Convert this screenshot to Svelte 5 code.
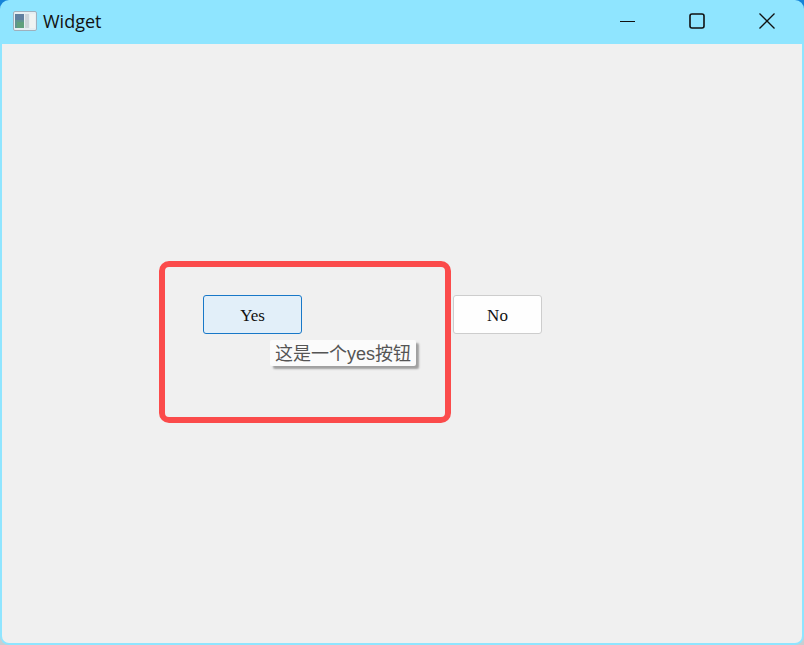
<script>
    const yesTip = "这是一个yes按钮";
</script>

<div class="corner-bg">
    <div class="window">
        <header class="titlebar">
            <div class="title">
                <svg class="app-icon" width="24" height="20" viewBox="0 0 24 20" aria-hidden="true">
                    <rect x="0.5" y="0.5" width="23" height="19" rx="1.5" fill="#e6eef2" stroke="#9fb0bd" />
                    <rect x="2" y="3" width="9" height="14" fill="#5f9490" />
                    <rect x="2" y="3" width="9" height="6" fill="#5f7f9f" />
                    <rect x="4" y="11" width="7" height="6" fill="#5fa07c" />
                    <rect x="12" y="3" width="4" height="14" fill="#cdd5da" />
                    <rect x="17" y="3" width="5" height="14" fill="#f0f3f2" />
                </svg>
                <span>Widget</span>
            </div>
            <div class="controls">
                <button class="ctl" aria-label="Minimize">
                    <svg width="16" height="16" viewBox="0 0 16 16"><path d="M1 8.5h15" stroke="#111" stroke-width="1" /></svg>
                </button>
                <button class="ctl" aria-label="Maximize">
                    <svg width="16" height="16" viewBox="0 0 16 16"><rect x="1" y="1" width="14" height="14" rx="2" fill="none" stroke="#111" stroke-width="1.6" /></svg>
                </button>
                <button class="ctl" aria-label="Close">
                    <svg width="16" height="16" viewBox="0 0 16 16"><path d="M0.5 0.5l15 15M15.5 0.5l-15 15" stroke="#111" stroke-width="1.3" /></svg>
                </button>
            </div>
        </header>

        <main class="content">
            <div class="buttons">
                <button class="btn yes">Yes</button>
                <button class="btn no">No</button>
            </div>
            <div class="highlight"></div>
            <div class="tooltip">{yesTip}</div>
        </main>
    </div>
</div>

<style>
    :global(body) {
        margin: 0;
        background: #c9ced1;
    }

    .corner-bg {
        width: 804px;
        height: 645px;
        background: linear-gradient(#1583d8 0 60px, #c9ced1 60px);
    }

    .window {
        width: 804px;
        height: 645px;
        box-sizing: border-box;
        display: flex;
        flex-direction: column;
        background: #8fe5ff;
        border-radius: 9px;
        padding: 0 2px 2px;
        overflow: hidden;
    }

    .titlebar {
        height: 44px;
        flex: none;
        display: flex;
        align-items: center;
        justify-content: space-between;
    }

    .title {
        display: flex;
        align-items: center;
        gap: 6px;
        padding: 0 0 2px 11px;
        font-family: "Open Sans", "Liberation Sans", sans-serif;
        font-size: 18px;
        color: #111;
    }

    .app-icon {
        display: block;
    }

    .controls {
        display: flex;
        gap: 54px;
        padding: 0 27px 2px 0;
    }

    .ctl {
        width: 16px;
        height: 16px;
        padding: 0;
        border: none;
        background: none;
    }

    .ctl svg {
        display: block;
    }

    .content {
        position: relative;
        flex: 1;
        background: #f0f0f0;
        border-radius: 0 0 7px 7px;
    }

    .buttons {
        display: flex;
        gap: 151px;
        padding: 251px 0 0 201px;
    }

    .btn {
        height: 39px;
        box-sizing: border-box;
        padding: 2px 0 0;
        border-radius: 3px;
        font-family: "Liberation Serif", serif;
        font-size: 17px;
        color: #111;
    }

    .yes {
        width: 99px;
        background: #e2eff9;
        border: 1px solid #1878c8;
    }

    .no {
        width: 89px;
        background: #fefefe;
        border: 1px solid #cdcdcd;
    }

    /* red annotation drawn over the screenshot */
    .highlight {
        position: absolute;
        left: 157px;
        top: 217px;
        width: 292px;
        height: 162px;
        box-sizing: border-box;
        border: 6px solid #fb4b4b;
        border-radius: 10px;
    }

    .tooltip {
        position: absolute;
        left: 268px;
        top: 296px;
        height: 26px;
        line-height: 28px;
        padding: 0 5px;
        background: #fbfbfb;
        border-radius: 2px;
        box-shadow: 3px 3px 2px #a0a0a0;
        font-family: "Liberation Sans", "Noto Sans CJK SC", sans-serif;
        font-size: 18px;
        color: #555;
        white-space: nowrap;
    }
</style>
